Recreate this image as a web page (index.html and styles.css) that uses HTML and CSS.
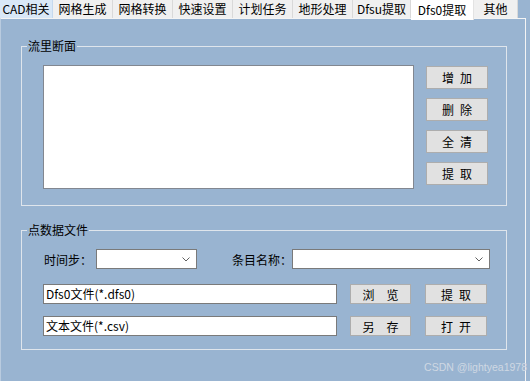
FILE: index.html
```html
<!DOCTYPE html>
<html lang="zh-CN">
  <head>
    <meta charset="UTF-8" />
    <meta name="viewport" content="width=device-width, initial-scale=1.0" />
    <title>Dfs0提取</title>
    <link rel="stylesheet" href="styles.css">
  </head>
  <body>
    <div class="window">
      <div class="tabs">
        <div class="tab tab-hover w53">CAD相关</div>
        <div class="tab w60">网格生成</div>
        <div class="tab w60">网格转换</div>
        <div class="tab w60">快速设置</div>
        <div class="tab w60">计划任务</div>
        <div class="tab w60">地形处理</div>
        <div class="tab w58">Dfsu提取</div>
        <div class="tab tab-active w63">Dfs0提取</div>
        <div class="tab w44">其他</div>
      </div>

      <div class="panel">
        <fieldset class="group">
          <legend>流里断面</legend>
          <div class="flow-body">
            <div class="listbox"></div>
            <div class="btn-col">
              <div class="btn btn-tall">增加</div>
              <div class="btn btn-tall">删除</div>
              <div class="btn btn-tall">全清</div>
              <div class="btn btn-tall">提取</div>
            </div>
          </div>
        </fieldset>

        <fieldset class="group group-points">
          <legend>点数据文件</legend>
          <div class="row row-combo">
            <span class="label label-step">时间步：</span>
            <div class="combo combo-step">
              <svg width="8" height="5" viewBox="0 0 8 5"><polyline points="0.5,0.5 4,4 7.5,0.5" fill="none" stroke="#606060" stroke-width="1"/></svg>
            </div>
            <span class="label label-item">条目名称：</span>
            <div class="combo combo-item">
              <svg width="8" height="5" viewBox="0 0 8 5"><polyline points="0.5,0.5 4,4 7.5,0.5" fill="none" stroke="#606060" stroke-width="1"/></svg>
            </div>
          </div>
          <div class="row row-file">
            <div class="textbox">Dfs0文件(*.dfs0)</div>
            <div class="btn btn-browse">浏览</div>
            <div class="btn btn-action">提取</div>
          </div>
          <div class="row row-file row-last">
            <div class="textbox">文本文件(*.csv)</div>
            <div class="btn btn-browse">另存</div>
            <div class="btn btn-action">打开</div>
          </div>
        </fieldset>
      </div>

      <div class="watermark">CSDN @lightyea1978</div>
    </div>
  </body>
</html>
```

FILE: styles.css
```css
body {
  margin: 0;
  background: #99b4d1;
  font-family: "Noto Sans CJK SC", sans-serif;
  font-size: 12px;
  color: #000;
}
.window {
  position: relative;
  width: 530px;
  height: 381px;
  overflow: hidden;
}

/* tab strip */
.tabs {
  display: flex;
  align-items: flex-start;
  height: 18px;
}
.tab {
  box-sizing: border-box;
  height: 18px;
  line-height: 18px;
  text-align: center;
  white-space: nowrap;
  background: #f0f0f0;
  border-right: 1px solid #d9d9d9;
}
.tab-hover {
  background: #d9e8f7;
  border-right-color: #c5d9ee;
}
.tab-active {
  position: relative;
  z-index: 1;
  height: 20px;
  line-height: 19px;
  background: #fff;
  border-right-color: #e3e3e3;
}
.w44 { width: 44px; }
.w53 { width: 53px; }
.w58 { width: 58px; }
.w60 { width: 60px; }
.w63 { width: 63px; }

/* page */
.panel {
  box-sizing: border-box;
  width: 526px;
  height: 363px;
  border: 1px solid #f4f4f4;
  border-left-color: #b9cbdf;
  border-bottom: none;
}
.group {
  box-sizing: border-box;
  width: 486px;
  margin: 20px 0 0 20px;
  padding: 0;
  min-inline-size: 0;
  border: 1px solid #dfe5ec;
}
.group legend {
  margin-left: 5px;
  padding: 0 1px;
  line-height: 14px;
}
.group-points {
  margin-top: 17px;
}

.flow-body {
  display: flex;
  align-items: flex-start;
  margin: 12px 0 16px 21px;
}
.listbox {
  box-sizing: border-box;
  width: 371px;
  height: 124px;
  background: #fff;
  border: 1px solid #828790;
}
.btn-col {
  display: flex;
  flex-direction: column;
  gap: 9px;
  margin: 1px 0 0 12px;
}

.btn {
  box-sizing: border-box;
  display: flex;
  align-items: center;
  justify-content: center;
  height: 20px;
  padding-left: 6px;
  letter-spacing: 6px;
  background: #e1e1e1;
  border: 1px solid #adadad;
  white-space: nowrap;
}
.btn-tall {
  width: 62px;
  height: 23px;
}
.btn-browse {
  width: 61px;
  margin-left: 13px;
  padding-left: 12px;
  letter-spacing: 12px;
}
.btn-action {
  width: 62px;
  margin-left: 14px;
}

/* point data group */
.row {
  display: flex;
  align-items: center;
  padding-left: 21px;
}
.row-combo {
  margin-top: 12px;
}
.row-file {
  margin-top: 15px;
}
.row-file + .row-file {
  margin-top: 12px;
}
.row-last {
  margin-bottom: 13px;
}
.label {
  white-space: nowrap;
}
.label-step {
  width: 52px;
  margin-left: 1px;
}
.label-item {
  width: 60px;
  margin-left: 35px;
}
.combo {
  box-sizing: border-box;
  display: flex;
  align-items: center;
  justify-content: flex-end;
  height: 20px;
  padding-right: 6px;
  background: #fff;
  border: 1px solid #7a7a7a;
}
.combo-step {
  width: 101px;
}
.combo-item {
  width: 198px;
}
.textbox {
  box-sizing: border-box;
  width: 294px;
  height: 20px;
  padding-left: 2px;
  line-height: 18px;
  background: #fff;
  border: 1px solid #7a7a7a;
  white-space: nowrap;
}

.watermark {
  position: absolute;
  right: 3px;
  top: 361px;
  font-family: "Liberation Sans", sans-serif;
  font-size: 10.5px;
  color: #cfd8e3;
}
```
